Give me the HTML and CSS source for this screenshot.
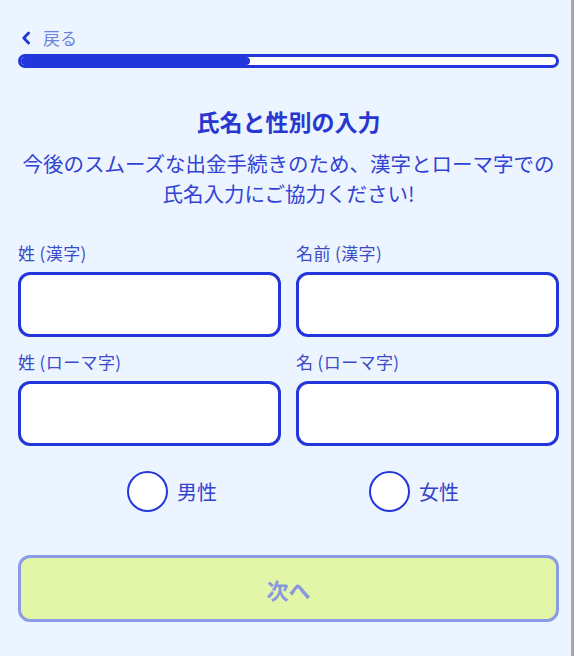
FILE: index.html
```html
<!DOCTYPE html>
<html lang="ja">
<head>
<meta charset="utf-8">
<title>氏名と性別の入力</title>
<link rel="stylesheet" href="styles.css">
</head>
<body>
<div class="page">
  <a class="back" href="#">
    <svg class="back-icon" viewBox="0 0 10 14" width="10" height="14"><path d="M7.6 2 L2.8 7 L7.6 12" fill="none" stroke="#2236d6" stroke-width="2.8" stroke-linecap="round" stroke-linejoin="round"/></svg>
    <span>戻る</span>
  </a>
  <div class="progress"><div class="progress-fill" style="width:42.8%"></div></div>

  <h1 class="title">氏名と性別の入力</h1>
  <p class="lead">今後のスムーズな出金手続きのため、漢字とローマ字での<br>氏名入力にご協力ください!</p>

  <div class="grid">
    <label class="field"><span class="label">姓 (漢字)</span><input class="input" type="text"></label>
    <label class="field"><span class="label">名前 (漢字)</span><input class="input" type="text"></label>
    <label class="field"><span class="label">姓 (ローマ字)</span><input class="input" type="text"></label>
    <label class="field"><span class="label">名 (ローマ字)</span><input class="input" type="text"></label>
  </div>

  <div class="radios">
    <label class="radio"><span class="circle"></span><span class="radio-text">男性</span></label>
    <label class="radio"><span class="circle"></span><span class="radio-text">女性</span></label>
  </div>

  <button class="next" type="button">次へ</button>
</div>
</body>
</html>
```
FILE: styles.css
```css
html, body {
  margin: 0;
  padding: 0;
}
body {
  background: #ebf4ff;
  font-family: "Noto Sans CJK JP", "Noto Sans", sans-serif;
  color: #3445cf;
}
.page {
  width: 574px;
  min-height: 656px;
  box-sizing: border-box;
  border-right: 3px solid #a4a7ac;
  padding: 28px 12px 0 18px;
}
.back {
  display: flex;
  align-items: center;
  height: 20px;
  text-decoration: none;
  color: #6d84df;
  font-size: 17px;
  line-height: 20px;
}
.back-icon {
  margin-left: 3px;
  margin-right: 12px;
}
.progress {
  margin-top: 6px;
  height: 14px;
  box-sizing: border-box;
  border: 3px solid #2236db;
  border-radius: 7px;
  background: #ffffff;
  overflow: hidden;
}
.progress-fill {
  height: 100%;
  background: #2236db;
  border-radius: 0 6px 6px 0;
}
.title {
  margin: 38px 0 0;
  font-size: 23px;
  line-height: 30px;
  font-weight: 700;
  text-align: center;
  color: #2737cf;
}
.lead {
  margin: 12px 0 0;
  font-size: 20.5px;
  line-height: 30px;
  text-align: center;
  color: #3242d2;
}
.grid {
  margin-top: 35px;
  display: grid;
  grid-template-columns: 1fr 1fr;
  column-gap: 15px;
  row-gap: 15px;
}
.field {
  display: flex;
  flex-direction: column;
}
.label {
  font-size: 17px;
  line-height: 20px;
  letter-spacing: 0.4px;
  color: #3b4ac8;
}
.input {
  margin-top: 9px;
  height: 65px;
  box-sizing: border-box;
  border: 3px solid #2236db;
  border-radius: 12px;
  background: #ffffff;
  font-size: 18px;
  padding: 0 12px;
  outline: none;
}
.radios {
  margin-top: 25px;
  display: flex;
  padding-left: 109px;
  gap: 152px;
}
.radio {
  display: flex;
  align-items: center;
}
.circle {
  width: 41px;
  height: 41px;
  box-sizing: border-box;
  border: 2.5px solid #2236db;
  border-radius: 50%;
  background: #ffffff;
}
.radio-text {
  margin-left: 9px;
  font-size: 20px;
  line-height: 28px;
  color: #3343c9;
}
.next {
  display: block;
  margin-top: 43px;
  width: 100%;
  height: 67px;
  box-sizing: border-box;
  border: 3px solid #8c9be6;
  border-radius: 12px;
  background: #e3f5a7;
  font-family: "Noto Sans CJK JP", "Noto Sans", sans-serif;
  font-size: 22px;
  font-weight: 700;
  color: #8797e0;
}
```
